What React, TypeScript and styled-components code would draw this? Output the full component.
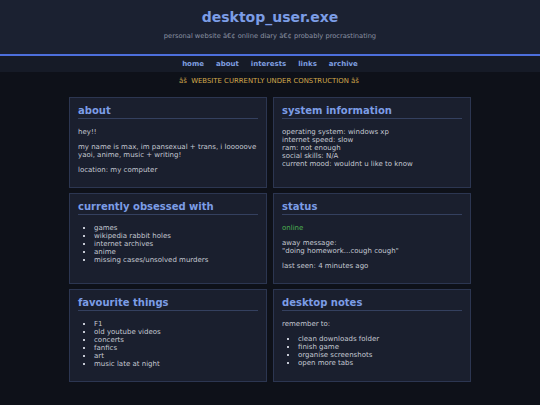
import React from "react";
import styled, { createGlobalStyle } from "styled-components";

const Global = createGlobalStyle`
  html, body { margin: 0; padding: 0; background: #0e1119; }
  body { font-family: "DejaVu Sans", Verdana, sans-serif; color: #c4c8d2; }
  * { box-sizing: border-box; }
`;

const Header = styled.header`
  background: #1b2131;
  height: 56px;
  border-bottom: 2px solid #4d6fdc;
  display: flex;
  flex-direction: column;
  align-items: center;
  padding-top: 8px;
`;

const Title = styled.h1`
  margin: 0;
  font-size: 14px;
  font-weight: bold;
  color: #7c9de6;
  line-height: 18px;
`;

const Subtitle = styled.p`
  margin: 6px 0 0;
  font-size: 6.7px;
  color: #8a91a2;
  line-height: 9px;
`;

const Nav = styled.nav`
  background: #161b27;
  height: 16px;
  display: flex;
  justify-content: center;
  align-items: center;
  gap: 12px;
`;

const NavLink = styled.a`
  color: #7f9fe0;
  font-size: 7px;
  font-weight: bold;
  text-decoration: none;
`;

const Banner = styled.div`
  text-align: center;
  color: #d2a84c;
  font-size: 6.9px;
  height: 18px;
  line-height: 18px;
`;

const Grid = styled.main`
  width: 402px;
  margin: 7px auto 0;
  display: grid;
  grid-template-columns: 1fr 1fr;
  column-gap: 6px;
  row-gap: 5px;
`;

const Card = styled.section`
  background: #1a1f2e;
  border: 1px solid #2c3651;
  padding: 6px 8px 6px;
`;

const CardTitle = styled.h2`
  margin: 0 0 9px;
  font-size: 10px;
  font-weight: bold;
  color: #7c9de6;
  line-height: 13px;
  padding-bottom: 1px;
  border-bottom: 1px solid #34405f;
`;

const P = styled.p<{ $color?: string }>`
  margin: 0 0 7px;
  font-size: 7px;
  line-height: 8px;
  color: ${(p) => p.$color ?? "#c4c8d2"};
`;

const List = styled.ul`
  margin: 0 0 7px;
  padding-left: 16px;
  font-size: 7px;
  line-height: 8px;
  list-style: square;
  li::marker { font-size: 6px; }
`;

export default function App() {
  return (
    <>
      <Global />
      <Header>
        <Title>desktop_user.exe</Title>
        <Subtitle>personal website â€¢ online diary â€¢ probably procrastinating</Subtitle>
      </Header>
      <Nav>
        <NavLink>home</NavLink>
        <NavLink>about</NavLink>
        <NavLink>interests</NavLink>
        <NavLink>links</NavLink>
        <NavLink>archive</NavLink>
      </Nav>
      <Banner>âš&nbsp; WEBSITE CURRENTLY UNDER CONSTRUCTION âš&nbsp;</Banner>
      <Grid>
        <Card>
          <CardTitle>about</CardTitle>
          <P>hey!!</P>
          <P>my name is max, im pansexual + trans, i looooove yaoi, anime, music + writing!</P>
          <P>location: my computer</P>
        </Card>
        <Card>
          <CardTitle>system information</CardTitle>
          <P>
            operating system: windows xp<br />
            internet speed: slow<br />
            ram: not enough<br />
            social skills: N/A<br />
            current mood: wouldnt u like to know
          </P>
        </Card>
        <Card>
          <CardTitle>currently obsessed with</CardTitle>
          <List>
            <li>games</li>
            <li>wikipedia rabbit holes</li>
            <li>internet archives</li>
            <li>anime</li>
            <li>missing cases/unsolved murders</li>
          </List>
        </Card>
        <Card>
          <CardTitle>status</CardTitle>
          <P $color="#4caf50">online</P>
          <P>
            away message:<br />
            "doing homework...cough cough"
          </P>
          <P>last seen: 4 minutes ago</P>
        </Card>
        <Card>
          <CardTitle>favourite things</CardTitle>
          <List>
            <li>F1</li>
            <li>old youtube videos</li>
            <li>concerts</li>
            <li>fanfics</li>
            <li>art</li>
            <li>music late at night</li>
          </List>
        </Card>
        <Card>
          <CardTitle>desktop notes</CardTitle>
          <P>remember to:</P>
          <List>
            <li>clean downloads folder</li>
            <li>finish game</li>
            <li>organise screenshots</li>
            <li>open more tabs</li>
          </List>
        </Card>
      </Grid>
    </>
  );
}
